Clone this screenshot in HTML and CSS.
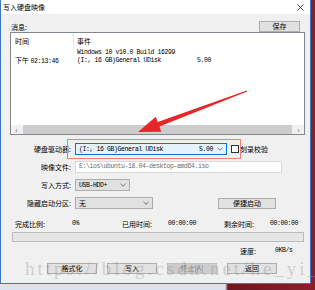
FILE: index.html
```html
<!DOCTYPE html>
<html lang="zh-CN">
<head>
  <meta charset="UTF-8" />
  <meta name="viewport" content="width=device-width, initial-scale=1.0" />
  <title>写入硬盘映像</title>
  <link rel="stylesheet" href="styles.css">
</head>
<body>
  <div class="win">
    <div class="titlebar">
      <span class="title">写入硬盘映像</span>
      <svg class="close" width="7" height="7" viewBox="0 0 7 7">
        <path d="M0.5 0.5L6.5 6.5M6.5 0.5L0.5 6.5" stroke="#222" stroke-width="0.8" fill="none"/>
      </svg>
    </div>

    <div class="content">
      <div class="msg-head">
        <span>消息:</span>
        <button class="btn save">保存</button>
      </div>

      <div class="list">
        <div class="list-head">
          <div class="col-time">时间</div>
          <div class="col-event">事件</div>
        </div>
        <div class="list-rows">
          <div class="row">
            <div class="col-time"></div>
            <div class="col-event mono">Windows 10 v10.0 Build 16299</div>
          </div>
          <div class="row">
            <div class="col-time">下午 <span class="mono">02:13:46</span></div>
            <div class="col-event mono"><span class="dev">(I:, 16 GB)General UDisk</span>5.00</div>
          </div>
        </div>
        <div class="hscroll">
          <span class="sarrow">&lsaquo;</span>
          <div class="thumb"></div>
          <span class="sarrow">&rsaquo;</span>
        </div>
      </div>

      <div class="form">
        <label>硬盘驱动器:</label>
        <div class="field">
          <div class="combo combo-drive">
            <span class="mono"><span class="dev">(I:, 16 GB)General UDisk</span>5.00</span>
            <svg class="chev" width="6" height="4" viewBox="0 0 6 4"><path d="M0.5 0.8L3 3.2L5.5 0.8" stroke="#444" stroke-width="0.7" fill="none"/></svg>
          </div>
          <span class="check"></span>
          <span>刻录校验</span>
        </div>

        <label>映像文件:</label>
        <div class="field">
          <div class="input mono">E:\ios\ubuntu-18.04-desktop-amd64.iso</div>
        </div>

        <label>写入方式:</label>
        <div class="field">
          <div class="combo combo-mode">
            <span class="mono">USB-HDD+</span>
            <svg class="chev" width="6" height="4" viewBox="0 0 6 4"><path d="M0.5 0.8L3 3.2L5.5 0.8" stroke="#444" stroke-width="0.7" fill="none"/></svg>
          </div>
        </div>

        <label>隐藏启动分区:</label>
        <div class="field">
          <div class="combo combo-hide">
            <span>无</span>
            <svg class="chev" width="6" height="4" viewBox="0 0 6 4"><path d="M0.5 0.8L3 3.2L5.5 0.8" stroke="#444" stroke-width="0.7" fill="none"/></svg>
          </div>
          <button class="btn quick">便捷启动</button>
        </div>
      </div>

      <div class="stats">
        <span>完成比例:</span>
        <span class="mono">0%</span>
        <span>已用时间:</span>
        <span class="mono">00:00:00</span>
        <span>剩余时间:</span>
        <span class="mono">00:00:00</span>
      </div>

      <div class="progress"></div>

      <div class="speed">
        <span class="speed-label">速度:</span>
        <span class="mono">0KB/s</span>
      </div>

      <div class="actions">
        <button class="btn act">格式化</button>
        <button class="btn act">写入</button>
        <button class="btn act disabled">终止[A]</button>
        <button class="btn act">返回</button>
      </div>
    </div>

    <!-- annotation layer -->
    <div class="mark"></div>
    <svg class="arrow" width="315" height="290" viewBox="0 0 315 290">
      <polygon points="138,132 161.4,131.8 159.5,126.6 247.2,91.5 246.8,90.5 157.7,121.9 155.8,116.8" fill="#e8262a"/>
    </svg>
    <div class="watermark">https://blog.csdn.net/he_yi_</div>
  </div>
</body>
</html>
```

FILE: styles.css
```css
* {
  box-sizing: border-box;
}
body {
  margin: 0;
  width: 315px;
  height: 290px;
  overflow: hidden;
  background: linear-gradient(to right, #dbe4ee 0, #dbe4ee 225px, #6e1621 228px, #8a1f2a 100%);
  font-family: "Noto Sans CJK SC", "Noto Sans", sans-serif;
  font-size: 7px;
  color: #000;
}
.mono {
  font-family: "Liberation Mono", monospace;
  font-size: 6.5px;
  letter-spacing: -0.4px;
}
.win {
  position: relative;
  width: 311px;
  height: 284px;
  background: #f0f0f0;
  border: 1px solid #3b78c4;
  border-top: none;
}
.titlebar {
  height: 14px;
  background: #fff;
  display: flex;
  align-items: center;
  justify-content: space-between;
  padding: 0 6px 0 2px;
  line-height: 14px;
}
.content {
  padding: 7px 5px 0 9px;
}
.msg-head {
  display: flex;
  justify-content: space-between;
  align-items: center;
  height: 11px;
  padding-left: 1px;
}
.btn {
  font: inherit;
  font-size: 7px;
  height: 11px;
  padding: 0;
  background: #e1e1e1;
  border: 1px solid #adadad;
  color: #000;
  line-height: 9px;
}
.save {
  width: 41px;
  margin-right: 5px;
}
.list {
  height: 103px;
  border: 1px solid #828790;
  background: #fff;
  display: flex;
  flex-direction: column;
}
.list-head {
  display: flex;
  height: 16px;
  align-items: stretch;
}
.list-head > div {
  display: flex;
  align-items: center;
}
.list-head .col-time {
  border-right: 1px solid #e5e5e5;
}
.col-time {
  width: 63px;
  padding-left: 4px;
}
.col-event {
  padding-left: 3px;
}
.list-rows {
  flex: 1;
}
.row {
  display: flex;
  height: 8px;
  line-height: 8px;
  align-items: center;
}
.dev {
  display: inline-block;
  width: 120px;
}
.hscroll {
  height: 9px;
  background: #f0f0f0;
  display: flex;
  align-items: stretch;
}
.sarrow {
  width: 11px;
  text-align: center;
  font-size: 8px;
  line-height: 9px;
  color: #555;
}
.thumb {
  flex: 1;
  background: #cdcdcd;
  margin: 0 1px;
}
.form {
  margin-top: 8px;
  display: grid;
  grid-template-columns: 61px 1fr;
  grid-auto-rows: 12px;
  column-gap: 4px;
  row-gap: 6px;
}
.form label {
  text-align: right;
  line-height: 12px;
  white-space: nowrap;
}
.field {
  display: flex;
  align-items: center;
}
.combo {
  height: 12px;
  display: flex;
  align-items: center;
  justify-content: space-between;
  padding: 0 3px 0 3px;
  background: #e1e1e1;
  border: 1px solid #adadad;
}
.combo-drive {
  width: 152px;
  background: #e5f1fb;
  border-color: #0078d7;
}
.combo-drive .dev {
  width: 120px;
}
.combo-mode {
  width: 55px;
}
.combo-hide {
  width: 78px;
}
.check {
  width: 8px;
  height: 8px;
  border: 1px solid #333;
  background: #fff;
  margin: 0 1px 0 4px;
}
.input {
  width: 207px;
  height: 12px;
  line-height: 10px;
  padding-left: 3px;
  border: 1px solid #d9d9d9;
  background: #fff;
  color: #6d6d6d;
}
.quick {
  width: 58px;
  margin-left: 65px;
}
.stats {
  margin-top: 10px;
  height: 10px;
  line-height: 10px;
  padding-left: 5px;
  display: grid;
  grid-template-columns: 57px 50px 46px 56px 46px auto;
}
.progress {
  margin: 3px 1px 0 2px;
  width: 292px;
  height: 10px;
  background: #e6e6e6;
  border: 1px solid #bcbcbc;
}
.speed {
  margin-top: 5px;
  height: 8px;
  line-height: 8px;
  padding-left: 230px;
  display: flex;
}
.speed-label {
  width: 35px;
}
.actions {
  margin-top: 8px;
  padding-left: 37px;
  display: flex;
  gap: 10px;
}
.act {
  width: 50px;
}
.act.disabled {
  background: #cccccc;
  border-color: #bfbfbf;
  color: #838383;
}
.mark {
  position: absolute;
  left: 66px;
  top: 139px;
  width: 174px;
  height: 20px;
  border: 1px solid #ec7e7e;
}
.arrow {
  position: absolute;
  left: -1px;
  top: 0;
  pointer-events: none;
}
.watermark {
  position: absolute;
  left: 24px;
  top: 259px;
  font-family: "Liberation Serif", serif;
  font-size: 19px;
  line-height: 19px;
  letter-spacing: 3px;
  color: rgba(150, 150, 150, 0.4);
  white-space: nowrap;
  pointer-events: none;
}
```
